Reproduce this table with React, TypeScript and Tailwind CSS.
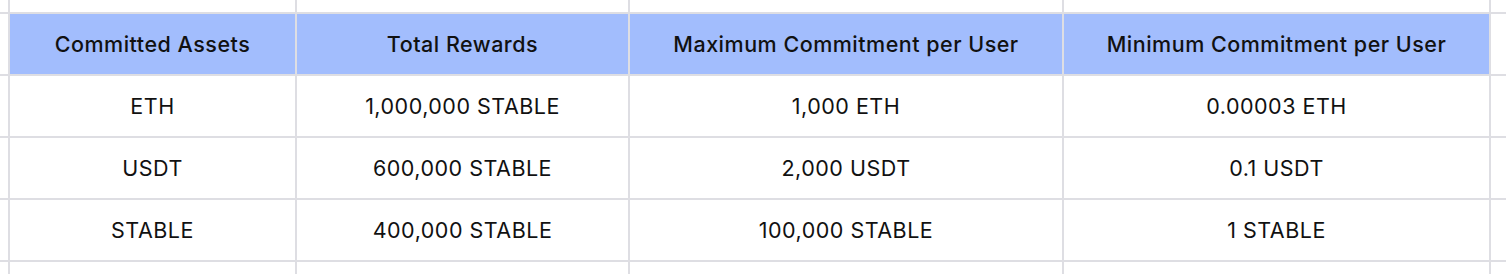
import React from "react";

const headers = [
  "Committed Assets",
  "Total Rewards",
  "Maximum Commitment per User",
  "Minimum Commitment per User",
];

const rows = [
  ["ETH", "1,000,000 STABLE", "1,000 ETH", "0.00003 ETH"],
  ["USDT", "600,000 STABLE", "2,000 USDT", "0.1 USDT"],
  ["STABLE", "400,000 STABLE", "100,000 STABLE", "1 STABLE"],
];

function Blank() {
  return <div className="bg-white" />;
}

export default function App() {
  return (
    <div
      className="w-[1506px] h-[274px] overflow-hidden bg-white text-[#111] text-[21.5px] tracking-[0.5px]"
      style={{ fontFamily: "Inter, 'Noto Sans', sans-serif" }}
    >
      <div className="grid grid-cols-[8px_285px_331px_432px_425px_1fr] grid-rows-[12px_60px_60px_60px_60px_12px] gap-[2px] bg-[#dedee3] h-full">
        {/* top partial row */}
        <Blank />
        <Blank />
        <Blank />
        <Blank />
        <Blank />
        <Blank />
        {/* header */}
        <Blank />
        {headers.map((h) => (
          <div
            key={h}
            className="bg-[#a2bdfd] flex items-center justify-center font-medium"
          >
            {h}
          </div>
        ))}
        <Blank />
        {rows.map((r, i) => (
          <React.Fragment key={i}>
            <Blank />
            {r.map((c, j) => (
              <div key={j} className="bg-white flex items-center justify-center">
                {c}
              </div>
            ))}
            <Blank />
          </React.Fragment>
        ))}
        {/* bottom partial row */}
        <Blank />
        <Blank />
        <Blank />
        <Blank />
        <Blank />
        <Blank />
      </div>
    </div>
  );
}
